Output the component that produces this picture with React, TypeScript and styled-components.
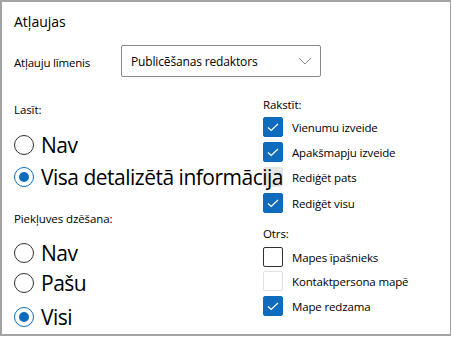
import React from "react";
import styled, { createGlobalStyle } from "styled-components";

const Global = createGlobalStyle`
  html, body { margin: 0; padding: 0; background: #ffffff; }
  body { font-family: "Open Sans", "Noto Sans", Arial, sans-serif; color: #000; }
`;

const Frame = styled.div`
  box-sizing: border-box;
  width: 451px;
  height: 336px;
  border: 2px solid #a3a3a3;
  border-right-width: 1px;
  padding: 10px 0 0 12px;
  overflow: hidden;
`;

const Title = styled.div`
  font-size: 14px;
  line-height: 20px;
  height: 20px;
`;

const LevelRow = styled.div`
  display: flex;
  align-items: center;
  margin-top: 13px;
`;

const FieldLabel = styled.div`
  width: 107px;
  font-size: 11.5px;
  letter-spacing: -0.2px;
  padding-top: 3px;
`;

const Select = styled.div`
  box-sizing: border-box;
  width: 200px;
  height: 32px;
  border: 1px solid #8a8a8a;
  border-radius: 2px;
  display: flex;
  align-items: center;
  justify-content: space-between;
  padding: 0 8px 0 9px;
  font-size: 12px;
  letter-spacing: -0.15px;
`;

const Columns = styled.div`
  display: grid;
  grid-template-columns: 249px 1fr;
  margin-top: 18px;
`;

const LeftCol = styled.div`
  position: relative;
  z-index: 1;
  display: flex;
  flex-direction: column;
  padding-top: 7px;
`;

const RightCol = styled.div`
  display: flex;
  flex-direction: column;
  padding-top: 2px;
`;

const GroupLabel = styled.div<{ $top?: number }>`
  font-size: 11.5px;
  letter-spacing: -0.1px;
  line-height: 16px;
  margin-top: ${(p) => p.$top ?? 0}px;
`;

const RadioRow = styled.div<{ $top: number }>`
  display: flex;
  align-items: center;
  gap: 7px;
  margin-top: ${(p) => p.$top}px;
  height: 30px;
  white-space: nowrap;
`;

const RadioCircle = styled.span<{ $checked?: boolean }>`
  box-sizing: border-box;
  flex: none;
  width: 20px;
  height: 20px;
  border-radius: 50%;
  border: 1px solid ${(p) => (p.$checked ? "#0f6cbd" : "#323130")};
  display: flex;
  align-items: center;
  justify-content: center;
  &::after {
    content: "";
    display: ${(p) => (p.$checked ? "block" : "none")};
    width: 10px;
    height: 10px;
    border-radius: 50%;
    background: #0f6cbd;
  }
`;

const RadioText = styled.span`
  font-size: 21px;
  letter-spacing: -0.5px;
  line-height: 30px;
`;

const CheckRow = styled.div<{ $top: number }>`
  display: flex;
  align-items: center;
  gap: 9px;
  margin-top: ${(p) => p.$top}px;
  height: 20px;
  white-space: nowrap;
`;

type BoxKind = "checked" | "disabledChecked" | "empty" | "disabled";

const Box = styled.span<{ $kind: BoxKind }>`
  box-sizing: border-box;
  flex: none;
  width: 20px;
  height: 20px;
  border-radius: 2px;
  display: flex;
  align-items: center;
  justify-content: center;
  background: ${(p) =>
    p.$kind === "checked" ? "#0f6cbd" : p.$kind === "disabledChecked" ? "#e6e6e6" : "#ffffff"};
  border: 1px solid
    ${(p) =>
      p.$kind === "checked"
        ? "#0f6cbd"
        : p.$kind === "disabledChecked"
        ? "#e6e6e6"
        : p.$kind === "empty"
        ? "#323130"
        : "#e1e1e1"};
`;

const CheckText = styled.span`
  font-size: 11.5px;
  letter-spacing: -0.15px;
`;

const Chevron = () => (
  <svg width="14" height="8" viewBox="0 0 14 8">
    <path d="M1 1 L7 7 L13 1" fill="none" stroke="#8a8a8a" strokeWidth="1" />
  </svg>
);

const Tick = ({ color }: { color: string }) => (
  <svg width="12" height="9" viewBox="0 0 12 9">
    <path d="M1 4.5 L4.2 7.5 L11 1" fill="none" stroke={color} strokeWidth="1.2" />
  </svg>
);

const Check = ({ kind, label, top }: { kind: BoxKind; label: string; top: number }) => (
  <CheckRow $top={top}>
    <Box $kind={kind}>
      {kind === "checked" && <Tick color="#ffffff" />}
      {kind === "disabledChecked" && <Tick color="#f5f5f5" />}
    </Box>
    <CheckText>{label}</CheckText>
  </CheckRow>
);

const Radio = ({ checked, label, top }: { checked?: boolean; label: string; top: number }) => (
  <RadioRow $top={top}>
    <RadioCircle $checked={checked} />
    <RadioText>{label}</RadioText>
  </RadioRow>
);

export default function App() {
  return (
    <>
      <Global />
      <Frame>
        <Title>Atļaujas</Title>
        <LevelRow>
          <FieldLabel>Atļauju līmenis</FieldLabel>
          <Select>
            <span>Publicēšanas redaktors</span>
            <Chevron />
          </Select>
        </LevelRow>
        <Columns>
          <LeftCol>
            <GroupLabel>Lasīt:</GroupLabel>
            <Radio label="Nav" top={12} />
            <Radio label="Visa detalizētā informācija" checked top={2} />
            <GroupLabel $top={19}>Piekļuves dzēšana:</GroupLabel>
            <Radio label="Nav" top={11} />
            <Radio label="Pašu" top={0} />
            <Radio label="Visi" checked top={4} />
          </LeftCol>
          <RightCol>
            <GroupLabel>Rakstīt:</GroupLabel>
            <Check kind="checked" label="Vienumu izveide" top={4} />
            <Check kind="checked" label="Apakšmapju izveide" top={5} />
            <Check kind="disabledChecked" label="Rediģēt pats" top={5} />
            <Check kind="checked" label="Rediģēt visu" top={6} />
            <GroupLabel $top={13}>Otrs:</GroupLabel>
            <Check kind="empty" label="Mapes īpašnieks" top={5} />
            <Check kind="disabled" label="Kontaktpersona mapē" top={4} />
            <Check kind="checked" label="Mape redzama" top={5} />
          </RightCol>
        </Columns>
      </Frame>
    </>
  );
}
